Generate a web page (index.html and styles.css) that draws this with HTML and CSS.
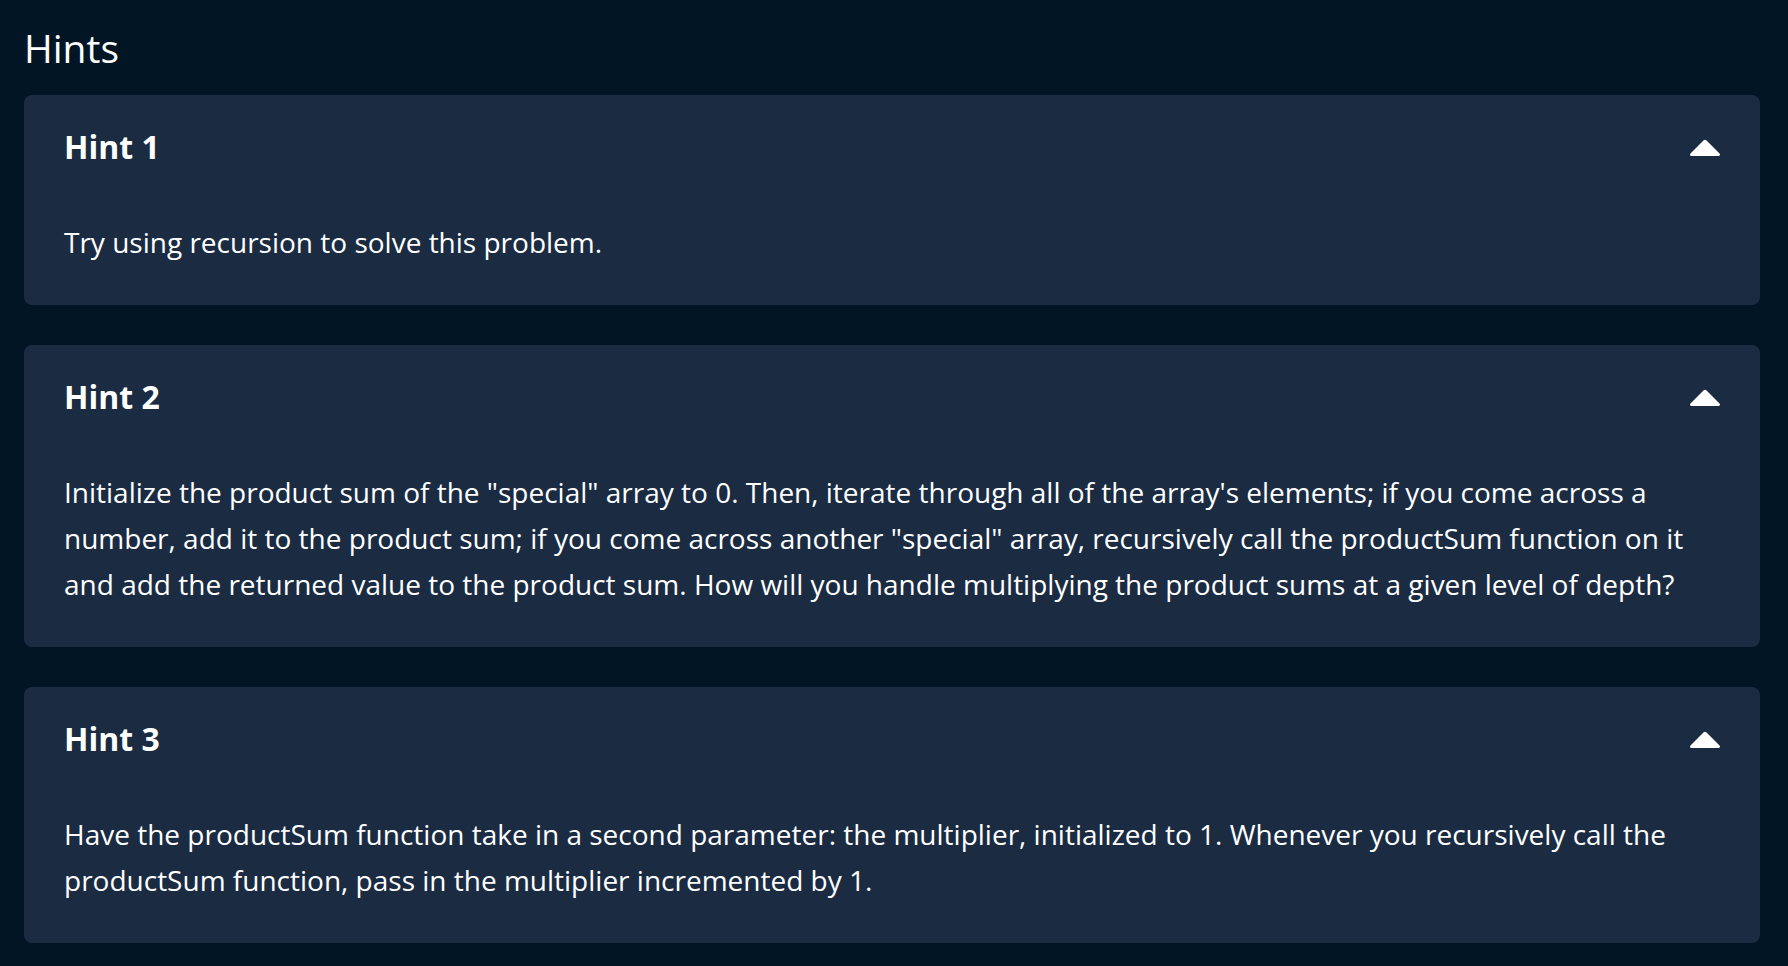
FILE: index.html
```html
<!DOCTYPE html>
<html lang="en">
<head>
<meta charset="utf-8">
<title>Hints</title>
<link rel="stylesheet" href="styles.css">
</head>
<body>
<main class="page">
  <h1 class="title">Hints</h1>
  <section class="hints">
    <article class="hint">
      <header class="hint-header">
        <h2 class="hint-title">Hint 1</h2>
        <svg class="caret" width="30" height="17" viewBox="0 0 30 17" aria-hidden="true"><path d="M1.6 17H28.4C29.8 17 30.5 15.4 29.5 14.4L16.3 1.3C15.6 0.6 14.4 0.6 13.7 1.3L0.5 14.4C-0.5 15.4 0.2 17 1.6 17Z" fill="#ffffff"/></svg>
      </header>
      <p class="hint-body">Try using recursion to solve this problem.</p>
    </article>
    <article class="hint">
      <header class="hint-header">
        <h2 class="hint-title">Hint 2</h2>
        <svg class="caret" width="30" height="17" viewBox="0 0 30 17" aria-hidden="true"><path d="M1.6 17H28.4C29.8 17 30.5 15.4 29.5 14.4L16.3 1.3C15.6 0.6 14.4 0.6 13.7 1.3L0.5 14.4C-0.5 15.4 0.2 17 1.6 17Z" fill="#ffffff"/></svg>
      </header>
      <p class="hint-body">Initialize the product sum of the "special" array to 0. Then, iterate through all of the array's elements; if you come across a number, add it to the product sum; if you come across another "special" array, recursively call the productSum function on it and add the returned value to the product sum. How will you handle multiplying the product sums at a given level of depth?</p>
    </article>
    <article class="hint">
      <header class="hint-header">
        <h2 class="hint-title">Hint 3</h2>
        <svg class="caret" width="30" height="17" viewBox="0 0 30 17" aria-hidden="true"><path d="M1.6 17H28.4C29.8 17 30.5 15.4 29.5 14.4L16.3 1.3C15.6 0.6 14.4 0.6 13.7 1.3L0.5 14.4C-0.5 15.4 0.2 17 1.6 17Z" fill="#ffffff"/></svg>
      </header>
      <p class="hint-body">Have the productSum function take in a second parameter: the multiplier, initialized to 1. Whenever you recursively call the productSum function, pass in the multiplier incremented by 1.</p>
    </article>
  </section>
</main>
</body>
</html>
```

FILE: styles.css
```css
html, body {
  margin: 0;
  padding: 0;
  background: #021524;
  height: 100%;
}

body {
  font-family: "Open Sans", "Noto Sans", "Liberation Sans", sans-serif;
  color: #ffffff;
  overflow: hidden;
}

.page {
  padding: 22px 28px 0 24px;
}

.title {
  margin: 0 0 21px;
  font-size: 39px;
  line-height: 52px;
  font-weight: 500;
  letter-spacing: 0;
}

.hints {
  display: flex;
  flex-direction: column;
  gap: 40px;
}

.hint {
  background: #1a2b42;
  border-radius: 8px;
  padding: 30px 40px 40px;
}

.hint-header {
  display: flex;
  align-items: center;
  justify-content: space-between;
  height: 44px;
}

.hint-title {
  margin: 0;
  font-size: 32px;
  line-height: 44px;
  font-weight: 700;
}

.caret {
  display: block;
  margin-top: 1px;
}

.hint-body {
  margin: 50px 0 0;
  font-size: 28px;
  line-height: 46px;
  font-weight: 400;
}
```
